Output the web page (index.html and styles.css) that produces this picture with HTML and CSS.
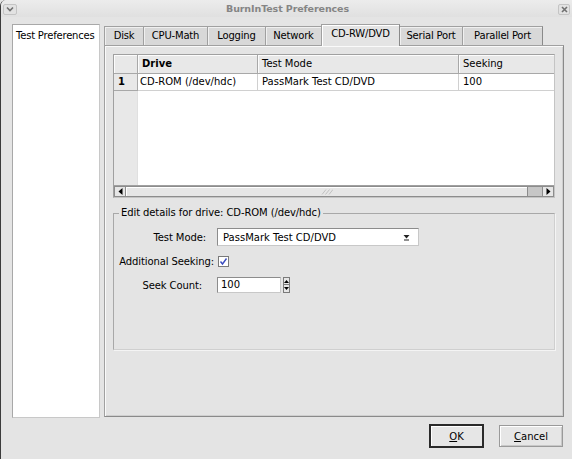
FILE: index.html
```html
<!DOCTYPE html>
<html>
<head>
<meta charset="utf-8">
<link rel="stylesheet" href="styles.css">
</head>
<body>
<div class="window">
  <div class="titlebar">
    <div class="tb-btn">
      <svg width="8" height="6" viewBox="0 0 8 6"><path d="M1 1.5 L4 4.5 L7 1.5" fill="none" stroke="#707070" stroke-width="1.6"/></svg>
    </div>
    <div class="title">BurnInTest Preferences</div>
    <div class="tb-btn close">
      <svg width="7" height="7" viewBox="0 0 7 7"><path d="M1 1 L6 6 M6 1 L1 6" fill="none" stroke="#707070" stroke-width="1.6"/></svg>
    </div>
  </div>

  <div class="main">
    <div class="sidebar">
      <div class="side-item">Test Preferences</div>
    </div>

    <div class="tabwidget">
      <div class="tabs">
        <div class="tab w-disk">Disk</div>
        <div class="tab w-cpu">CPU-Math</div>
        <div class="tab w-log">Logging</div>
        <div class="tab w-net">Network</div>
        <div class="tab w-cd selected">CD-RW/DVD</div>
        <div class="tab w-ser">Serial Port</div>
        <div class="tab w-par last">Parallel Port</div>
      </div>

      <div class="pane">
        <div class="table">
          <div class="thead">
            <div class="cell rn"></div>
            <div class="cell c-drive bold">Drive</div>
            <div class="cell c-mode">Test Mode</div>
            <div class="cell c-seek">Seeking</div>
          </div>
          <div class="trow">
            <div class="cell rn bold">1</div>
            <div class="cell c-drive">CD-ROM (/dev/hdc)</div>
            <div class="cell c-mode">PassMark Test CD/DVD</div>
            <div class="cell c-seek">100</div>
          </div>
          <div class="tfill">
            <div class="rn-fill"></div>
            <div class="white-fill"></div>
          </div>
          <div class="hscroll">
            <div class="sb-btn">
              <svg width="5" height="7" viewBox="0 0 5 7"><path d="M4.5 0 L0.5 3.5 L4.5 7 Z" fill="#000"/></svg>
            </div>
            <div class="sb-slider">
              <svg width="12" height="6" viewBox="0 0 12 6"><path d="M1 5.5 L5 0.5 M4.5 5.5 L8.5 0.5 M8 5.5 L12 0.5" stroke="#b8b8b8" stroke-width="0.8"/></svg>
            </div>
            <div class="sb-trough"></div>
            <div class="sb-btn">
              <svg width="5" height="7" viewBox="0 0 5 7"><path d="M0.5 0 L4.5 3.5 L0.5 7 Z" fill="#000"/></svg>
            </div>
          </div>
        </div>

        <fieldset class="group">
          <legend>Edit details for drive: CD-ROM (/dev/hdc)</legend>
          <div class="form">
            <div class="label l-mode">Test Mode:</div>
            <div class="combo">
              <span>PassMark Test CD/DVD</span>
              <svg width="7" height="7" viewBox="0 0 7 7"><path d="M0.5 1 L6.5 1 L3.5 4.5 Z" fill="#222"/><path d="M1 6 L6 6" stroke="#222" stroke-width="1"/></svg>
            </div>
            <div class="label l-add">Additional Seeking:</div>
            <div class="field">
              <div class="checkbox">
                <svg width="9" height="9" viewBox="0 0 9 9"><path d="M1.5 4.5 L3.5 7 L7.5 1.5" fill="none" stroke="#3a4cc0" stroke-width="1.4"/></svg>
              </div>
            </div>
            <div class="label l-count">Seek Count:</div>
            <div class="field spin-row">
              <div class="spin-input">100</div>
              <div class="spin-btns">
                <div class="spin-btn"><svg width="5" height="3" viewBox="0 0 5 3"><path d="M0 3 L2.5 0 L5 3 Z" fill="#000"/></svg></div>
                <div class="spin-btn"><svg width="5" height="3" viewBox="0 0 5 3"><path d="M0 0 L2.5 3 L5 0 Z" fill="#000"/></svg></div>
              </div>
            </div>
          </div>
        </fieldset>
      </div>
    </div>
  </div>

  <div class="buttons">
    <button class="btn default"><u>O</u>K</button>
    <button class="btn cancel"><u>C</u>ancel</button>
  </div>
</div>
</body>
</html>
```

FILE: styles.css
```css
* { box-sizing: border-box; }
html, body { margin: 0; padding: 0; background: #e4e4e4; }
body {
  font-family: "DejaVu Sans", "Liberation Sans", sans-serif;
  font-size: 10px;
  color: #000;
}
.window {
  width: 572px;
  height: 459px;
  background: #e4e4e4;
  border-left: 1px solid #3c3c3c;
  border-top-left-radius: 6px;
  overflow: hidden;
}
.titlebar {
  height: 17px;
  display: flex;
  align-items: center;
  padding: 0 2px 0 2px;
  background: linear-gradient(#ececec, #e0e0e0);
}
.tb-btn {
  width: 14px;
  height: 11px;
  border: 1px solid #c4c4c4;
  border-radius: 2px;
  background: #e2e2e2;
  display: flex;
  align-items: center;
  justify-content: center;
  margin-top: 1px;
}
.tb-btn.close { width: 12px; }
.title {
  flex: 1;
  text-align: center;
  font-weight: bold;
  font-size: 9.5px;
  color: #858585;
  letter-spacing: -0.1px;
}
.main {
  display: flex;
  padding: 7px 8px 0 11px;
  gap: 4px;
}
.sidebar {
  width: 88px;
  height: 394px;
  background: #fff;
  border: 1px solid #a8a8a8;
  border-right-color: #c8c8c8;
  border-bottom-color: #c8c8c8;
  padding: 5px 0 0 3px;
}
.side-item { line-height: 11px; letter-spacing: -0.2px; }

.tabwidget {
  width: 460px;
  display: flex;
  flex-direction: column;
}
.tabs {
  height: 21px;
  display: flex;
  align-items: flex-end;
}
.tab {
  height: 19px;
  background: #d8d8d8;
  border: 1px solid #a0a0a0;
  border-right: none;
  border-bottom: none;
  box-shadow: inset 1px 1px 0 #f0f0f0;
  text-align: center;
  line-height: 18px;
  letter-spacing: -0.2px;
  position: relative;
  top: 0;
}
.tab.last { border-right: 1px solid #8a8a8a; }
.tab.selected {
  height: 22px;
  background: #e4e4e4;
  border-right: 1px solid #8a8a8a;
  line-height: 17px;
  margin-bottom: -1px;
  z-index: 1;
  box-shadow: inset 1px 1px 0 #fff;
}
.tab.selected + .tab { border-left: none; }
.w-disk { width: 39px; }
.w-cpu { width: 64px; }
.w-log { width: 58px; }
.w-net { width: 56px; }
.w-cd { width: 79px; }
.w-ser { width: 62px; }
.w-par { width: 81px; }

.pane {
  height: 372px;
  border: 1px solid #a0a0a0;
  border-right-color: #8a8a8a;
  border-bottom-color: #8a8a8a;
  box-shadow: inset 1px 1px 0 #fafafa, inset -1px -1px 0 #cfcfcf;
  padding: 8px 8px 0 8px;
}

.table {
  width: 442px;
  height: 144px;
  border: 1px solid #a0a0a0;
  border-right-color: #c4c4c4;
  border-bottom-color: #c4c4c4;
  background: #fff;
  display: flex;
  flex-direction: column;
}
.thead, .trow { display: flex; }
.thead { height: 19px; background: #e8e8e8; }
.thead .cell {
  border-right: 1px solid #a8a8a8;
  border-bottom: 1px solid #a8a8a8;
  box-shadow: inset 1px 1px 0 #fcfcfc;
  line-height: 18px;
  padding-left: 4px;
}
.trow { height: 17px; }
.trow .cell {
  border-right: 1px solid #d0d0d0;
  border-bottom: 1px solid #d0d0d0;
  line-height: 16px;
  padding-left: 2px;
}
.trow .cell.rn {
  background: #e8e8e8;
  border-right-color: #a8a8a8;
  border-bottom-color: #a8a8a8;
  padding-left: 4px;
}
.cell { white-space: nowrap; overflow: hidden; }
.rn { width: 24px; }
.c-drive { width: 120px; }
.c-mode { width: 201px; }
.c-seek { width: 95px; border-right: none !important; }
.thead .c-mode, .thead .c-seek { padding-left: 4px; }
.trow .c-mode, .trow .c-seek { padding-left: 4px; }
.bold { font-weight: bold; }

.tfill { flex: 1; display: flex; }
.rn-fill { width: 24px; background: #e8e8e8; border-right: 1px solid #e0e0e0; }
.white-fill { flex: 1; }

.hscroll {
  height: 12px;
  display: flex;
  background: #e4e4e4;
  border-top: 1px solid #a0a0a0;
}
.sb-btn {
  width: 12px;
  height: 11px;
  border: 1px solid #8c8c8c;
  background: #e6e6e6;
  display: flex;
  align-items: center;
  justify-content: center;
}
.sb-slider {
  width: 402px;
  height: 11px;
  border: 1px solid #8c8c8c;
  border-left: none;
  background: #e6e6e6;
  box-shadow: inset 1px 1px 0 #fff;
  display: flex;
  align-items: center;
  justify-content: center;
}
.sb-trough { flex: 1; background: #c6c6c6; border-bottom: 1px solid #8c8c8c; border-top: 1px solid #8c8c8c; }

.group {
  margin: 9px 0 0 0;
  width: 442px;
  height: 143px;
  border: 1px solid #a8a8a8;
  border-right-color: #cfcfcf;
  border-bottom-color: #cfcfcf;
  box-shadow: 1px 1px 0 #f4f4f4;
  padding: 9px 5px 0 5px;
}
.group legend {
  padding: 0 2px;
  margin-left: 0;
  line-height: 12px;
  letter-spacing: -0.1px;
}
.form {
  display: grid;
  grid-template-columns: 98px 202px;
  grid-auto-rows: 18px;
  row-gap: 6px;
  align-items: center;
}
.label { text-align: right; white-space: nowrap; letter-spacing: -0.1px; }
.l-mode { padding-right: 11px; }
.l-add { padding-right: 3px; }
.l-count { padding-right: 15px; }
.combo {
  height: 18px;
  width: 202px;
  background: #fff;
  border: 1px solid #8c8c8c;
  border-right-color: #c8c8c8;
  border-bottom-color: #c8c8c8;
  display: flex;
  align-items: center;
  justify-content: space-between;
  padding: 0 8px 0 5px;
}
.field { display: flex; align-items: center; }
.checkbox {
  width: 11px;
  height: 11px;
  margin-left: 1px;
  background: #fff;
  border: 1px solid #7a7a7a;
  display: flex;
  align-items: center;
  justify-content: center;
}
.spin-row { gap: 2px; }
.spin-input {
  width: 64px;
  height: 16px;
  background: #fff;
  border: 1px solid #8c8c8c;
  border-right-color: #c8c8c8;
  border-bottom-color: #c8c8c8;
  line-height: 14px;
  padding-left: 3px;
}
.spin-btns { display: flex; flex-direction: column; }
.spin-btn {
  width: 7px;
  height: 8px;
  border: 1px solid #7a7a7a;
  background: #e6e6e6;
  display: flex;
  align-items: center;
  justify-content: center;
}
.spin-btn + .spin-btn { border-top: none; }

.buttons {
  display: flex;
  justify-content: flex-end;
  gap: 15px;
  padding: 6px 9px 0 0;
  align-items: flex-start;
}
.btn {
  font-family: inherit;
  font-size: 10px;
  color: #000;
  background: #e6e6e6;
  margin: 0;
  padding: 0;
}
.btn.default {
  width: 55px;
  height: 24px;
  border: 2px solid #2a2a2a;
  box-shadow: inset 1px 1px 0 #fff;
}
.btn.cancel {
  width: 64px;
  height: 22px;
  margin-top: 1px;
  border: 1px solid #9a9a9a;
  box-shadow: inset 1px 1px 0 #fff, inset -1px -1px 0 #c8c8c8;
}
```
